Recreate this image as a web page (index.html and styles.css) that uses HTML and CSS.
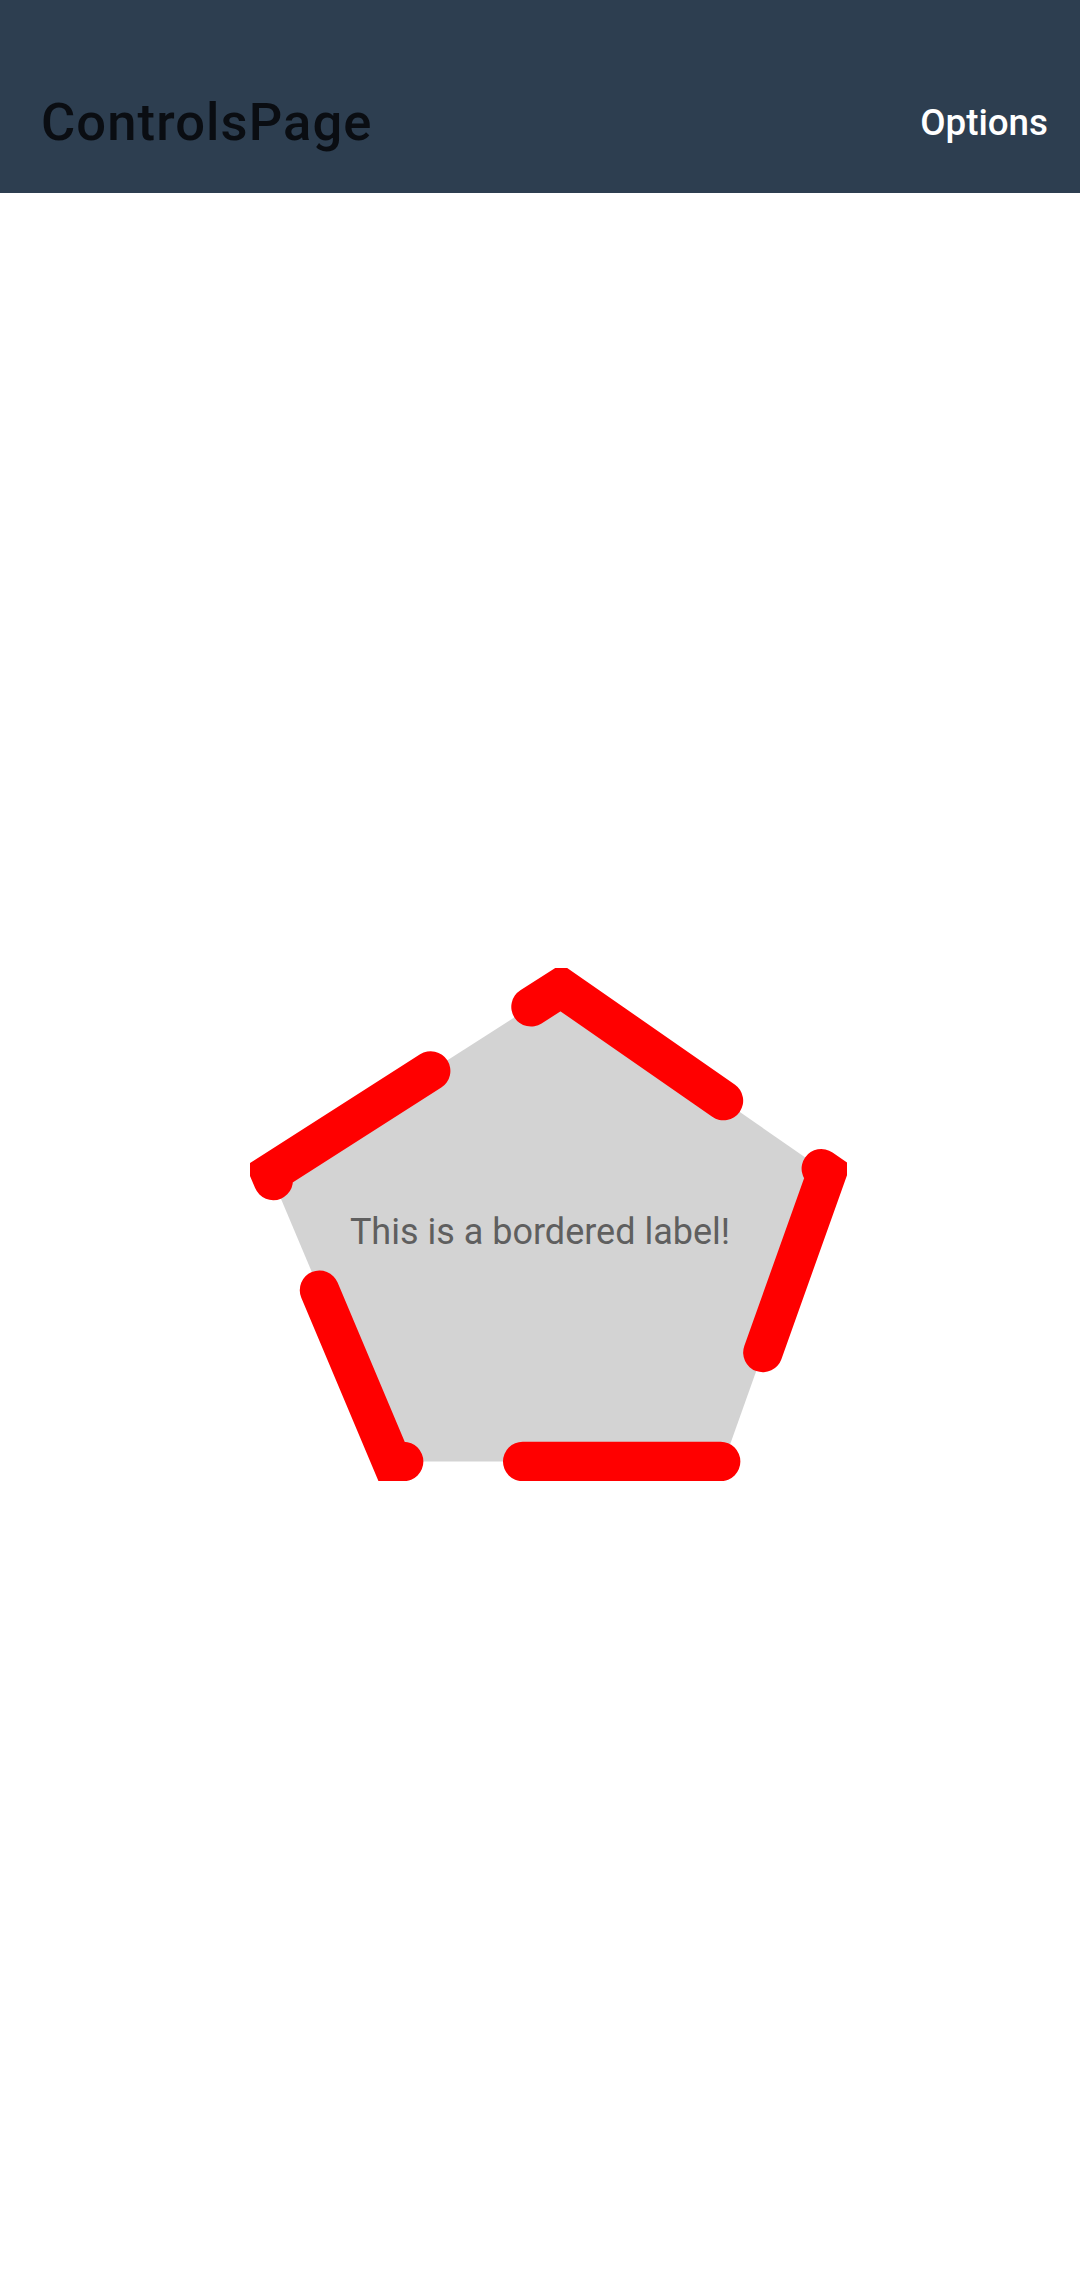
FILE: index.html
```html
<!DOCTYPE html>
<html lang="en">
<head>
  <meta charset="UTF-8" />
  <meta name="viewport" content="width=device-width, initial-scale=1.0"/>
  <title>ControlsPage</title>
  <link rel="stylesheet" href="styles.css">
</head>
<body>
  <header class="toolbar">
    <h1 class="toolbar-title">ControlsPage</h1>
    <span class="toolbar-item">Options</span>
  </header>

  <main class="page">
    <div class="bordered">
      <!-- pentagon border, dashed red stroke, clipped to its box -->
      <svg class="bordered-shape" width="597" height="513" viewBox="0 0 597 513">
        <polygon class="shape-fill" points="311,19.7 577,204.6 474,493.5 141.6,493.5 20.3,205.4" />
        <path class="shape-stroke" d="M521.2,165.8 L577,204.6 L474,493.5 L141.6,493.5 L20.3,205.4 L311,19.7 L521.2,165.8" />
      </svg>
      <div class="bordered-label">This is a bordered label!</div>
    </div>
  </main>
</body>
</html>
```

FILE: styles.css
```css
body {
  margin: 0;
  font-family: Roboto, "Noto Sans", sans-serif;
  background: #fff;
}

.toolbar {
  display: flex;
  align-items: center;
  justify-content: space-between;
  height: 193px;
  box-sizing: border-box;
  padding: 51px 32px 0 41px;
  background: #2d3e50;
}

.toolbar-title {
  margin: 0;
  font-size: 52.5px;
  font-weight: 500;
  letter-spacing: 1.1px;
  color: #0a0d12;
}

.toolbar-item {
  font-size: 36.75px;
  font-weight: 500;
  color: #fff;
}

.page {
  display: flex;
  justify-content: center;
  padding-top: 775px;
}

.bordered {
  display: grid;
  margin-left: 17px;
}

.bordered > * {
  grid-area: 1 / 1;
}

.bordered-shape {
  display: block;
}

.shape-fill {
  fill: #d3d3d3;
}

.shape-stroke {
  fill: none;
  stroke: #ff0000;
  stroke-width: 39.4;
  stroke-linecap: round;
  stroke-dasharray: 198 119 198 119 198 119 198 119 233.5 119;
  stroke-dashoffset: -61;
}

.bordered-label {
  align-self: start;
  margin-top: 243px;
  padding-right: 17px;
  text-align: center;
  font-size: 36px;
  color: #5f5f5f;
}
```
